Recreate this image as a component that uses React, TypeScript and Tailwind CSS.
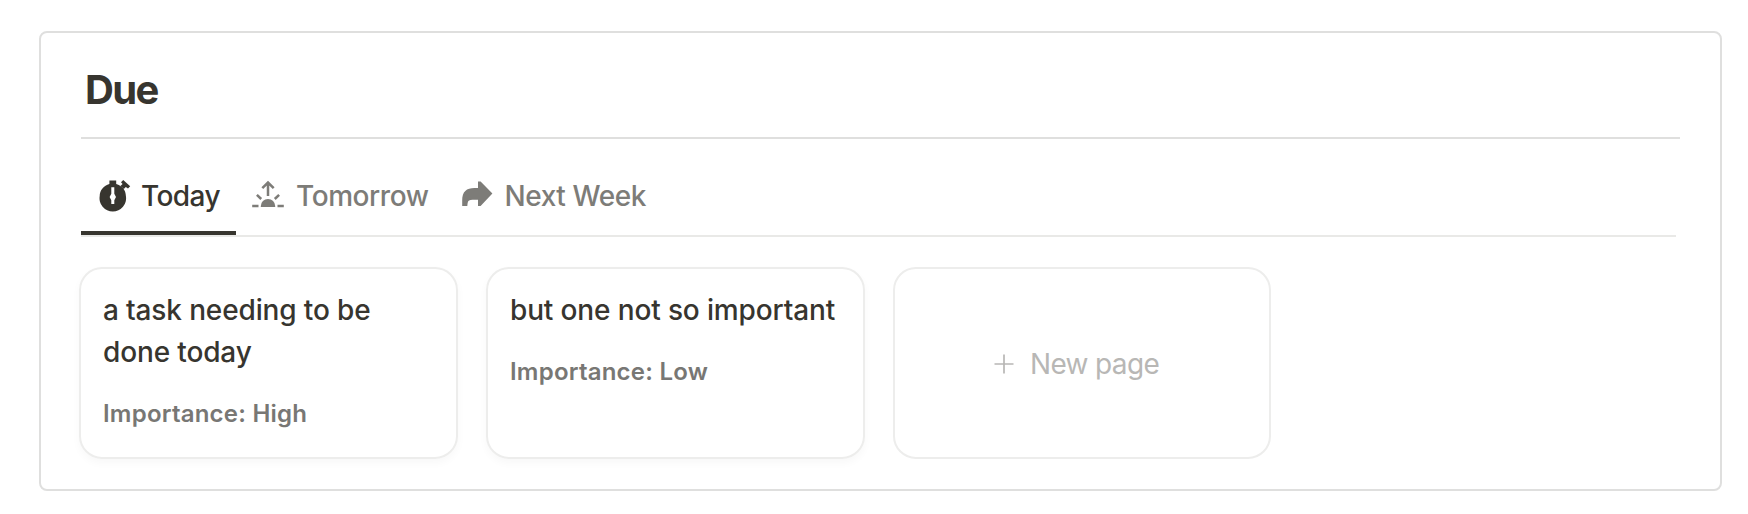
import React from "react";

type IconProps = { className?: string };

function StopwatchIcon({ className }: IconProps) {
  return (
    <svg className={className} viewBox="0 0 32 32" fill="currentColor">
      <path d="M10.400 .4h6.800v3.500c5.600 1.600 9.700 6 9.700 12.100a13.300 13.300 0 1 1-26.200 0c0-6 4.100-10.500 9.700-12.100z" />
      <path d="M22 2.200L24.200 0l7 6.300-2.200 2.200-2.200-1.600-2 2.200-3.400-3 2.200-2.200z" />
      <path d="M12.300 7.200h3v6.600l1.700 3.300-1.700 3.200v3.700h-3v-3.700l-1.700-3.200 1.700-3.300z" fill="#fff" />
    </svg>
  );
}

function SunriseIcon({ className }: IconProps) {
  return (
    <svg className={className} viewBox="0 0 32 28" fill="none" stroke="currentColor" strokeWidth="2.500">
      <path d="M16 16V3M10.300 8.200L16 2.500l5.700 5.700" />
      <path d="M4.900 14.800l4.300 4.200M27.100 14.800l-4.300 4.200M.2 25.900h6.300M25.500 25.900h6.300" />
      <path d="M8.800 27v-.9a7.200 7.200 0 0 1 14.400 0v.9z" fill="currentColor" stroke="none" />
    </svg>
  );
}

function ShareArrowIcon({ className }: IconProps) {
  return (
    <svg className={className} viewBox="0 0 32 26" fill="currentColor">
      <path d="M17 .4h2.600L31.400 12.500 19.600 25H17v-6.200h-5.500c-3 0-4.600 1-4.900 3.400L6.300 25H1.200v-5.500C1.200 10.500 5.500 7 13.500 7H17z" />
    </svg>
  );
}

function TaskCard({ title, importance }: { title: React.ReactNode; importance: string }) {
  return (
    <article className="h-48 w-[379px] rounded-[23px] border-2 border-[#ededec] px-[22px] pt-5 shadow-[0_4px_8px_rgba(15,15,15,0.03)]">
      <h3 className="whitespace-nowrap text-[28px] font-medium leading-[42px] tracking-[-0.14px]">{title}</h3>
      <p className="mt-5 whitespace-nowrap text-[24px] font-semibold leading-[42px] tracking-[0.22px] text-[#787774]">Importance: {importance}</p>
    </article>
  );
}

export default function App() {
  return (
    <main className="h-[514px] bg-white pl-[39px] pt-[31px] font-['Inter',sans-serif] text-[#37352f] antialiased">
      <section className="h-[460px] w-[1683px] rounded-[8px] border-2 border-[#dfdfde] px-10">
        <header className="h-[106px] w-[1599px] border-b-2 border-[#dfdfde] pl-1 pt-[31px]">
          <h2 className="text-[40px] font-bold leading-[52px] tracking-[-1.6px]">Due</h2>
        </header>
        <nav className="flex h-[98px] w-[1595px] items-end border-b-2 border-[#e9e9e7] text-[28px] font-medium leading-[42px] tracking-[-0.43px] text-[#7d7c78]">
          <div className="flex h-[60px] w-[155px] items-start border-b-4 border-[#37352f] pl-[18px] text-[#37352f]">
            <StopwatchIcon className="mt-[5px] h-8 w-8 shrink-0" />
            <span className="ml-[10px] tracking-[-0.6px]">Today</span>
          </div>
          <div className="flex h-[60px] items-start pl-4">
            <SunriseIcon className="mt-[5px] h-7 w-8 shrink-0" />
            <span className="ml-3">Tomorrow</span>
          </div>
          <div className="flex h-[60px] items-start pl-8">
            <ShareArrowIcon className="mt-[6px] h-[26px] w-8 shrink-0" />
            <span className="ml-3">Next Week</span>
          </div>
        </nav>
        <div className="-ml-[2px] mt-[30px] flex gap-7">
          <TaskCard title={<>a task needing to be<br />done today</>} importance="High" />
          <TaskCard title="but one not so important" importance="Low" />
          <button className="flex h-48 w-[378px] items-center rounded-[23px] border-2 border-[#ededec] pl-[99px] pt-[2px] text-[28px] leading-[42px] tracking-[-0.66px] text-[#b8b7b5]">
            <svg className="h-5 w-5" viewBox="0 0 20 20" stroke="currentColor" strokeWidth="1.7">
              <path d="M10 .5v19M.5 10h19" />
            </svg>
            <span className="ml-4">New page</span>
          </button>
        </div>
      </section>
    </main>
  );
}
